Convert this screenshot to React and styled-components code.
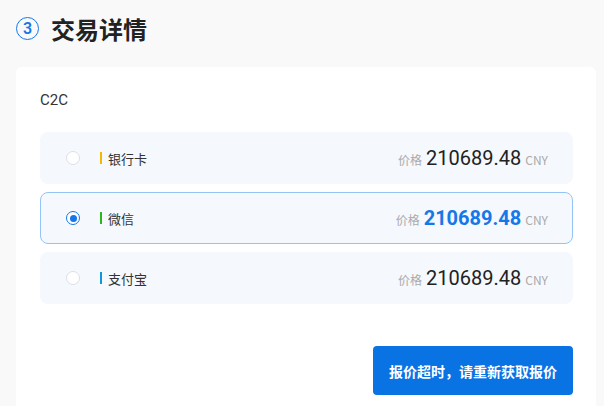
import React, { useState } from "react";
import styled, { createGlobalStyle, css } from "styled-components";

const GlobalStyle = createGlobalStyle`
  html, body {
    margin: 0;
    padding: 0;
    background: #f9f9f9;
    font-family: Roboto, "Noto Sans CJK SC", sans-serif;
  }
`;

const Page = styled.div`
  padding: 14px 8px 0 16px;
`;

const Header = styled.div`
  display: flex;
  align-items: center;
  gap: 12px;
  height: 28px;
`;

const StepBadge = styled.span`
  width: 23px;
  height: 23px;
  box-sizing: border-box;
  border: 1.6px solid #1677e8;
  border-radius: 50%;
  color: #1677e8;
  font-size: 16px;
  font-weight: 600;
  display: flex;
  align-items: center;
  justify-content: center;
`;

const Title = styled.h2`
  margin: 0;
  font-size: 24px;
  font-weight: 700;
  color: #222;
  font-family: "Noto Sans CJK SC", sans-serif;
`;

const Card = styled.div`
  margin-top: 25px;
  background: #fff;
  border-radius: 6px;
  padding: 24px 23px 40px 24px;
`;

const Label = styled.div`
  font-size: 15px;
  line-height: 18px;
  color: #333;
  margin-bottom: 23px;
`;

const Options = styled.div`
  display: flex;
  flex-direction: column;
  gap: 8px;
`;

const Option = styled.label`
  display: flex;
  align-items: center;
  height: 52px;
  box-sizing: border-box;
  padding: 0 24px 0 25px;
  background: #f5f8fd;
  border: 1px solid transparent;
  border-radius: 8px;
  cursor: pointer;
  ${(p) =>
    p.$active &&
    css`
      border-color: #94c4f5;
    `}
`;

const Radio = styled.span`
  width: 14px;
  height: 14px;
  box-sizing: border-box;
  border-radius: 50%;
  background: #fff;
  border: 1px solid #dcdfe6;
  display: flex;
  align-items: center;
  justify-content: center;
  ${(p) =>
    p.$checked &&
    css`
      border: 1.5px solid #1677e8;
      &::after {
        content: "";
        width: 7px;
        height: 7px;
        border-radius: 50%;
        background: #1677e8;
      }
    `}
`;

const Method = styled.span`
  display: flex;
  align-items: center;
  gap: 6px;
  margin-left: 20px;
  font-size: 13px;
  color: #333;
  font-family: "Noto Sans CJK SC", sans-serif;
  &::before {
    content: "";
    width: 2px;
    height: 12px;
    background: ${(p) => p.$color};
  }
`;

const Price = styled.span`
  margin-left: auto;
  display: flex;
  align-items: baseline;
  gap: 4px;
`;

const Muted = styled.span`
  font-size: 12px;
  color: #aaa;
  font-family: "Noto Sans CJK SC", sans-serif;
`;

const Amount = styled.span`
  font-size: 20px;
  color: #222;
  ${(p) =>
    p.$active &&
    css`
      color: #1677e8;
      font-weight: 700;
    `}
`;

const Footer = styled.div`
  display: flex;
  justify-content: flex-end;
  margin-top: 42px;
`;

const Button = styled.button`
  width: 200px;
  height: 49px;
  border: none;
  border-radius: 4px;
  background: #0a73e4;
  color: #fff;
  font-size: 14px;
  font-weight: 700;
  font-family: "Noto Sans CJK SC", sans-serif;
  cursor: pointer;
`;

const methods = [
  { name: "银行卡", color: "#f5b800" },
  { name: "微信", color: "#2db71f" },
  { name: "支付宝", color: "#1296db" },
];

export default function App() {
  const [selected, setSelected] = useState(1);
  return (
    <Page>
      <GlobalStyle />
      <Header>
        <StepBadge>3</StepBadge>
        <Title>交易详情</Title>
      </Header>
      <Card>
        <Label>C2C</Label>
        <Options>
          {methods.map((m, i) => (
            <Option key={m.name} $active={selected === i} onClick={() => setSelected(i)}>
              <Radio $checked={selected === i} />
              <Method $color={m.color}>{m.name}</Method>
              <Price>
                <Muted>价格</Muted>
                <Amount $active={selected === i}>210689.48</Amount>
                <Muted>CNY</Muted>
              </Price>
            </Option>
          ))}
        </Options>
        <Footer>
          <Button>报价超时，请重新获取报价</Button>
        </Footer>
      </Card>
    </Page>
  );
}
